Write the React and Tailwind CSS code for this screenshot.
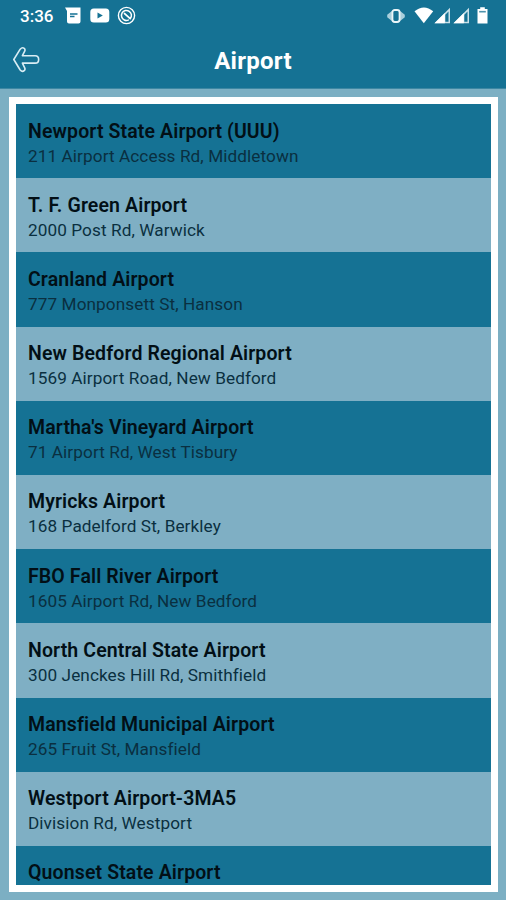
const AIRPORTS = [
  { name: "Newport State Airport (UUU)", address: "211 Airport Access Rd, Middletown" },
  { name: "T. F. Green Airport", address: "2000 Post Rd, Warwick" },
  { name: "Cranland Airport", address: "777 Monponsett St, Hanson" },
  { name: "New Bedford Regional Airport", address: "1569 Airport Road, New Bedford" },
  { name: "Martha's Vineyard Airport", address: "71 Airport Rd, West Tisbury" },
  { name: "Myricks Airport", address: "168 Padelford St, Berkley" },
  { name: "FBO Fall River Airport", address: "1605 Airport Rd, New Bedford" },
  { name: "North Central State Airport", address: "300 Jenckes Hill Rd, Smithfield" },
  { name: "Mansfield Municipal Airport", address: "265 Fruit St, Mansfield" },
  { name: "Westport Airport-3MA5", address: "Division Rd, Westport" },
  { name: "Quonset State Airport", address: "" },
];

function NewsIcon() {
  return (
    <svg width="16" height="17" viewBox="0 0 16 17">
      <path d="M0 0.5H15.5V14.5Q15.5 16.5 13.5 16.5H4Q2 16.5 2 14.5V4Z" fill="#fff" />
      <path d="M5 7H12.5M5 9.5H9.5" stroke="#157294" strokeWidth="1.7" />
    </svg>
  );
}

function YoutubeIcon() {
  return (
    <svg width="20" height="15" viewBox="0 0 20 15">
      <rect x="0.3" y="0.5" width="19" height="14" rx="3.5" fill="#fff" />
      <path d="M7.5 4.5L12.8 7.5L7.5 10.5Z" fill="#157294" />
    </svg>
  );
}

function ShazamIcon() {
  return (
    <svg width="19" height="19" viewBox="0 0 19 19" fill="none" stroke="#fff" strokeLinecap="round">
      <circle cx="9.5" cy="9.5" r="8.1" strokeWidth="1.4" />
      <path d="M11.3 14.1A5 5 0 1 1 14.4 8.6Q14.6 10.6 13.4 12.3" strokeWidth="1.5" />
      <path d="M7.6 7.6L13.2 12.6" strokeWidth="1.9" />
    </svg>
  );
}

function VibrateIcon() {
  return (
    <svg width="18" height="14" viewBox="0 0 18 14">
      <path d="M4.9 2V12L0.2 8.2V5.8ZM13.1 2V12L17.8 8.2V5.8Z" fill="#a9cfdc" />
      <rect x="5.4" y="1" width="7.2" height="12" rx="2.4" fill="none" stroke="#eaf5f8" strokeWidth="1.9" />
    </svg>
  );
}

function WifiIcon() {
  return (
    <svg width="20" height="17" viewBox="0 0 20 17">
      <path d="M0.5 4.3Q10 -3.5 19.2 4.3L9.8 16.2Z" fill="#fff" />
    </svg>
  );
}

function SignalIcon() {
  return (
    <svg width="17" height="17" viewBox="0 0 17 17">
      <path d="M0.5 16.2L16 0.8V16.2Z" fill="#c9e0e8" />
      <path d="M11.3 7.7L14.5 4.5V14.7H11.3Z" fill="#157294" />
      <path d="M0.5 16.2L10.8 6V16.2Z" fill="#fff" />
    </svg>
  );
}

function BatteryIcon() {
  return (
    <svg width="11" height="17" viewBox="0 0 11 17">
      <path d="M3.2 0.3H7.8V2H10.5V16.5H0.5V2H3.2Z" fill="#fff" />
      <rect x="2.2" y="3.9" width="6.6" height="1.6" fill="#4e93ac" />
    </svg>
  );
}

function StatusBar() {
  return (
    <div className="flex h-[31px] items-center justify-between pr-[18px] pl-5 text-white">
      <div className="flex items-center">
        <span className="w-[45px] pt-px text-[17px] leading-none font-medium">3:36</span>
        <NewsIcon />
        <span className="ml-[9px]">
          <YoutubeIcon />
        </span>
        <span className="ml-[7px]">
          <ShazamIcon />
        </span>
      </div>
      <div className="flex items-center">
        <VibrateIcon />
        <span className="ml-[9px]">
          <WifiIcon />
        </span>
        <span>
          <SignalIcon />
        </span>
        <span className="ml-[2px]">
          <SignalIcon />
        </span>
        <span className="ml-[7px]">
          <BatteryIcon />
        </span>
      </div>
    </div>
  );
}

function BackArrow() {
  return (
    <svg width="28" height="28" viewBox="0 0 28 28" fill="none" stroke="#d9edf4" strokeWidth="1.6" strokeLinejoin="round">
      <path d="M1.8 13.5L8.2 3.2Q10.2 0.9 12.2 2.3Q13.5 3.6 12.7 5.2L10.4 9.7H23.2C27.8 9.7 27.8 17.1 23.2 17.1H10.4L12.7 21.8Q13.5 23.4 12.2 24.7Q10.2 26.3 8.2 24Z" />
    </svg>
  );
}

export default function App() {
  return (
    <div className="flex h-[900px] w-[506px] flex-col overflow-hidden bg-[#7cafc3] font-['Roboto',sans-serif]">
      <header className="h-[89px] shrink-0 border-b border-[#3d87a3] bg-[#157294]">
        <StatusBar />
        <div className="grid h-[57px] grid-cols-[28px_1fr_28px] items-center px-3">
          <button type="button" aria-label="Back">
            <BackArrow />
          </button>
          <h1 className="pt-0.5 text-center text-[24px] leading-none font-bold tracking-[0.25px] text-white">Airport</h1>
        </div>
      </header>

      <main className="mx-[9px] mt-2 mr-2 h-[795px] shrink-0 overflow-hidden border-[7px] border-white">
        <ul>
          {AIRPORTS.map((airport) => (
            <li key={airport.name} className="h-[74.2px] px-3 pt-[14.5px] odd:bg-[#157294] even:bg-[#7fafc4]">
              <p className="text-[19.5px] leading-[25px] font-semibold tracking-[0.12px] whitespace-nowrap text-[#020f16]">
                {airport.name}
              </p>
              <p className="text-[17.2px] leading-[25px] font-normal tracking-[0.08px] whitespace-nowrap text-[#0a2f40]">
                {airport.address}
              </p>
            </li>
          ))}
        </ul>
      </main>
    </div>
  );
}
